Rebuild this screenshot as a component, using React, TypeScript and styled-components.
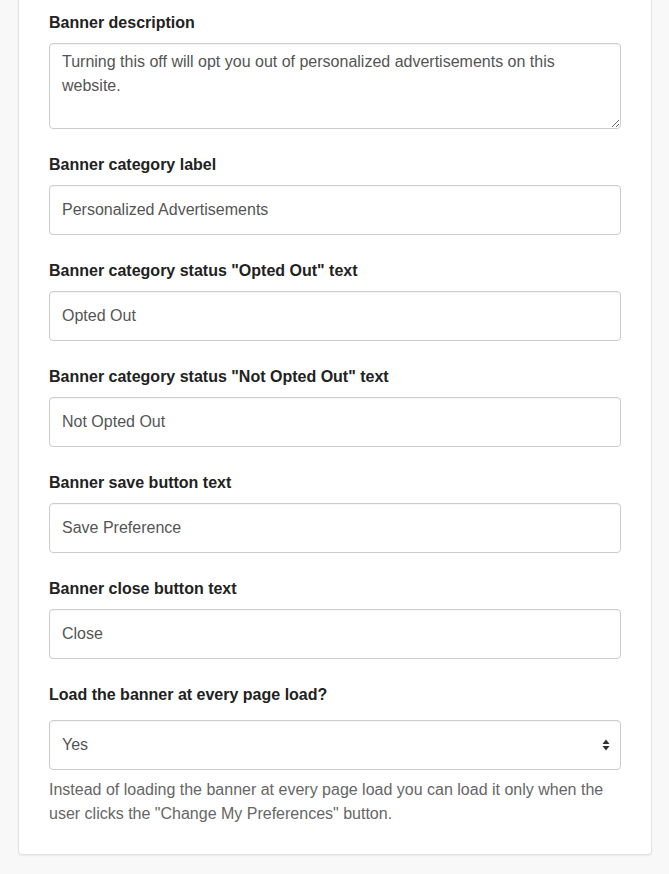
import React from 'react'
import styled, { createGlobalStyle } from 'styled-components'

const GlobalStyle = createGlobalStyle`
  html, body {
    margin: 0;
    padding: 0;
    background: #f8f8f8;
  }
  body {
    font-family: "Liberation Sans", Arial, sans-serif;
    color: #333;
  }
  *, *:before, *:after {
    box-sizing: border-box;
  }
`

const Page = styled.div`
  padding: 0 17px 20px 18px;
`

const Card = styled.div`
  margin-top: -22px;
  background: #ffffff;
  border: 1px solid #e3e3e3;
  border-radius: 4px;
  box-shadow: 0 1px 2px rgba(0, 0, 0, 0.06);
  padding: 33px 30px 28px;
`

const Group = styled.div`
  margin-bottom: 25px;
  &:last-child {
    margin-bottom: 0;
  }
`

const Label = styled.label<{ $extra?: number }>`
  display: block;
  font-size: 16px;
  font-weight: 700;
  line-height: 21px;
  color: #222;
  margin-bottom: ${p => 10 + (p.$extra || 0)}px;
`

const fieldBase = `
  display: block;
  width: 100%;
  font-family: "Liberation Sans", Arial, sans-serif;
  font-size: 16px;
  line-height: 24px;
  color: #555;
  background: #fff;
  border: 1px solid #ccc;
  border-radius: 4px;
  box-shadow: inset 0 1px 1px rgba(0, 0, 0, 0.04);
  padding: 12px 12px;
  margin: 0;
  outline: none;
`

const Input = styled.input`
  ${fieldBase}
  height: 50px;
`

const TextArea = styled.textarea`
  ${fieldBase}
  height: 86px;
  padding: 6px 12px 7px;
  resize: vertical;
`

const SelectWrap = styled.div`
  position: relative;
`

const Select = styled.select`
  ${fieldBase}
  height: 50px;
  appearance: none;
  -webkit-appearance: none;
  padding-right: 30px;
`

const Arrows = styled.svg`
  position: absolute;
  right: 11px;
  top: 50%;
  transform: translateY(-50%);
  pointer-events: none;
`

const Help = styled.p`
  margin: 8px 0 0;
  font-size: 16px;
  line-height: 24px;
  color: #666;
`

const fields = [
  { label: 'Banner category label', value: 'Personalized Advertisements' },
  { label: 'Banner category status "Opted Out" text', value: 'Opted Out' },
  { label: 'Banner category status "Not Opted Out" text', value: 'Not Opted Out' },
  { label: 'Banner save button text', value: 'Save Preference' },
  { label: 'Banner close button text', value: 'Close' },
]

const App: React.FC = () => {
  return (
    <Page>
      <GlobalStyle />
      <Card>
        <Group>
          <Label>Banner description</Label>
          <TextArea
            defaultValue="Turning this off will opt you out of personalized advertisements on this website."
          />
        </Group>
        {fields.map(f => (
          <Group key={f.label}>
            <Label>{f.label}</Label>
            <Input defaultValue={f.value} />
          </Group>
        ))}
        <Group>
          <Label $extra={5}>Load the banner at every page load?</Label>
          <SelectWrap>
            <Select defaultValue="yes">
              <option value="yes">Yes</option>
              <option value="no">No</option>
            </Select>
            <Arrows width="8" height="12" viewBox="0 0 8 12">
              <path d="M4 0.5 L7.5 5 L0.5 5 Z" fill="#333" />
              <path d="M4 11.5 L7.5 7 L0.5 7 Z" fill="#333" />
            </Arrows>
          </SelectWrap>
          <Help>
            Instead of loading the banner at every page load you can load it only when the
            user clicks the "Change My Preferences" button.
          </Help>
        </Group>
      </Card>
    </Page>
  )
}

export default App
